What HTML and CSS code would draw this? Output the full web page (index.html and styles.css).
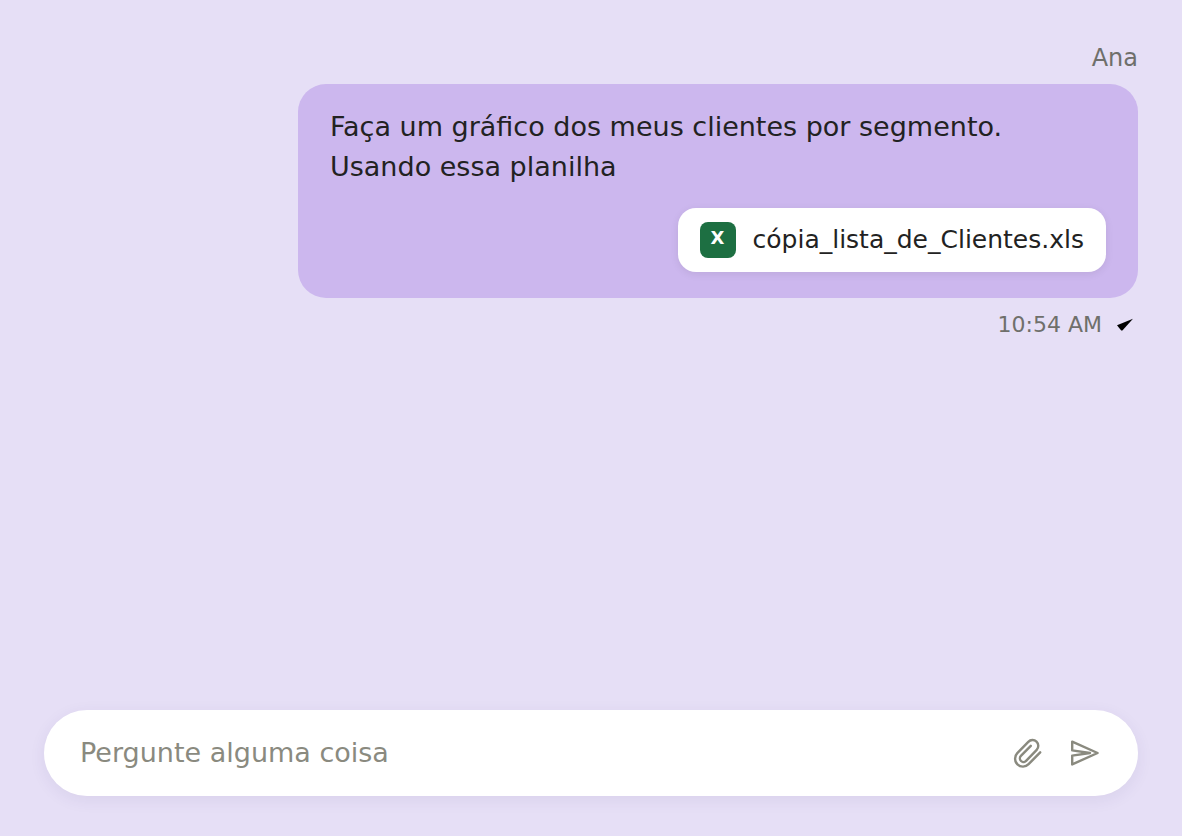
FILE: index.html
```html
<!DOCTYPE html>
<html lang="pt-BR">
<head>
    <meta charset="UTF-8">
    <meta name="viewport" content="width=device-width, initial-scale=1.0">
    <title>Chat</title>
    <link rel="stylesheet" href="styles.css">
</head>
<body>

<main class="messages">
    <article class="message">
        <div class="author">Ana</div>
        <div class="bubble">
            <p>Faça um gráfico dos meus clientes por segmento. Usando essa planilha</p>
            <a href="#" class="attachment">
                <span class="file-icon">X</span>
                <span>cópia_lista_de_Clientes.xls</span>
            </a>
        </div>
        <div class="meta">
            <time datetime="10:54">10:54 AM</time>
            <svg class="check" viewBox="0 0 24 24" aria-hidden="true">
                <path d="M3 12.2 19 5.8 8.4 17.6 7.2 17.6Z"/>
            </svg>
        </div>
    </article>
</main>

<form class="composer">
    <input type="text" name="question" placeholder="Pergunte alguma coisa" aria-label="Pergunte alguma coisa">
    <button type="button" aria-label="Anexar arquivo">
        <svg viewBox="0 0 32 32">
            <path d="M28.2 15.3 16.6 27.2A7.8 7.8 0 0 1 5.3 16.2L16.3 4.8A5.8 5.8 0 0 1 24.7 12.8L14.1 23.9A3.6 3.6 0 0 1 8.9 18.9L18.8 8.8"/>
        </svg>
    </button>
    <button type="submit" aria-label="Enviar">
        <svg viewBox="0 0 32 32">
            <path d="M4.2 4.6 29.6 16 4.2 27.4V18.6L22 16 4.2 13.4Z"/>
        </svg>
    </button>
</form>

</body>
</html>
```

FILE: styles.css
```css
* {
    box-sizing: border-box;
}
body {
    margin: 0;
    min-height: 100vh;
    padding: 40px 44px;
    display: flex;
    flex-direction: column;
    background-color: #e6dff6;
    color: #222;
    font-family: "DejaVu Sans", sans-serif;
}
.messages {
    flex: 1;
}
.message {
    display: flex;
    flex-direction: column;
    align-items: flex-end;
}
.author {
    color: #6f6f6b;
    font-size: 24px;
    line-height: 36px;
    margin-bottom: 8px;
}
.bubble {
    width: 840px;
    max-width: 100%;
    padding: 23px 32px 26px;
    display: flex;
    flex-direction: column;
    align-items: flex-end;
    gap: 21px;
    border-radius: 28px;
    background-color: #ccb7ee;
}
.bubble p {
    width: 100%;
    margin: 0;
    font-size: 27px;
    line-height: 40px;
}
.attachment {
    display: flex;
    align-items: center;
    gap: 17px;
    padding: 14px 22px;
    border-radius: 18px;
    background-color: #fff;
    color: #222;
    font-size: 25px;
    line-height: 34px;
    text-decoration: none;
    box-shadow: 0 2px 8px rgba(0, 0, 0, 0.08);
}
.file-icon {
    width: 36px;
    height: 36px;
    border-radius: 8px;
    background-color: #1d6f42;
    color: #fff;
    font-size: 18px;
    font-weight: bold;
    line-height: 32px;
    text-align: center;
}
.meta {
    display: flex;
    align-items: center;
    gap: 12px;
    margin-top: 12px;
    color: #6f6f6b;
    font-size: 22px;
    line-height: 30px;
}
.check {
    width: 24px;
    height: 24px;
}

/* message box */
.composer {
    display: flex;
    align-items: center;
    gap: 24px;
    height: 86px;
    padding: 0 38px 0 36px;
    border-radius: 43px;
    background-color: #fff;
    box-shadow: 0 4px 16px rgba(60, 50, 120, 0.08);
}
.composer input {
    flex: 1;
    min-width: 0;
    padding: 0 0 2px;
    border: none;
    outline: none;
    background: none;
    color: #222;
    font-family: inherit;
    font-size: 27px;
}
.composer input::placeholder {
    color: #8a8a7f;
}
.composer button {
    padding: 0;
    border: none;
    background: none;
    color: #8a8a7f;
    cursor: pointer;
}
.composer svg {
    display: block;
    width: 32px;
    height: 32px;
    fill: none;
    stroke: currentColor;
    stroke-width: 2.4;
    stroke-linecap: round;
    stroke-linejoin: round;
}
```
